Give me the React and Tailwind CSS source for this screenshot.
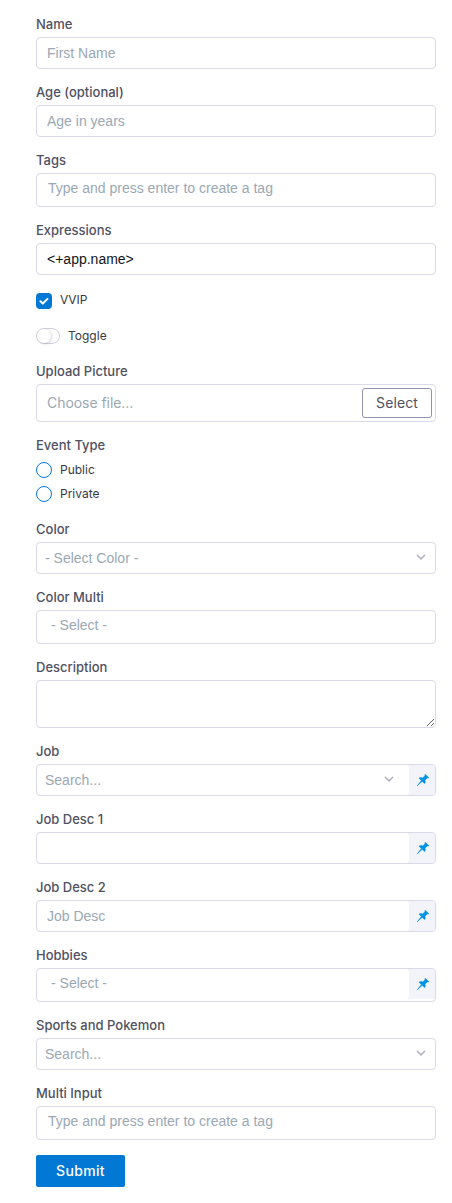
import React from "react";

const box =
  "flex w-full overflow-hidden rounded-[4px] border border-[#d9d9e8] bg-white font-['Liberation_Sans',Arial,sans-serif] text-[14px]";
const inputText =
  "min-w-0 flex-1 bg-transparent text-[#10161a] outline-none placeholder:text-[#9aa8b3] placeholder:opacity-100";

function Field({ label, children }) {
  return (
    <div className="flex flex-col gap-[5px]">
      <label className="h-4 text-[13px] font-medium leading-4 text-[#4f5162]">{label}</label>
      {children}
    </div>
  );
}

function Chevron({ className = "" }) {
  return (
    <svg className={`mt-[10px] h-2 w-[10px] shrink-0 ${className}`} viewBox="0 0 10 8" fill="none">
      <path d="M1.3 2.2 5 5.9 8.7 2.2" stroke="#b0b1c3" strokeWidth="1.5" strokeLinecap="round" strokeLinejoin="round" />
    </svg>
  );
}

function Pin({ short = false }) {
  return (
    <div className={`flex w-[27px] shrink-0 bg-[#f3f3fa] ${short ? "h-[30px]" : "h-full"}`}>
      <div className="-ml-1 h-full w-[5px] shrink-0 rounded-r-[4px] bg-white" />
      <svg className="ml-[8px] mt-[9px] h-3 w-3 shrink-0 overflow-visible" viewBox="0 0 12 12" fill="#0092e4">
        <path
          d="M8.3.2 11.8 3.7c-.5.5-1.1.5-1.6.2L8 6.3c.5 1.2.4 2.3-.4 3.3L5.2 7.3.3 11.8 4.4 6.5 2 4.2C3 3.4 4.4 3.4 5.6 3.9L8.1 1.8C7.8 1.2 7.9.6 8.3.2Z"
          stroke="#0092e4"
          strokeWidth="0.6"
          strokeLinejoin="round"
        />
      </svg>
    </div>
  );
}

function TextBox({ placeholder, value, pin }) {
  return (
    <div className={`${box} h-8`}>
      <input className={`${inputText} pl-[10px]`} placeholder={placeholder} defaultValue={value} />
      {pin && <Pin />}
    </div>
  );
}

function SelectBox({ placeholder, pin }) {
  return (
    <div className={`${box} h-8`}>
      <input className={`${inputText} pl-2`} placeholder={placeholder} />
      <Chevron className={pin ? "mr-[14px]" : "mr-[9px]"} />
      {pin && <Pin />}
    </div>
  );
}

function TagBox({ placeholder, indent = "pl-[11px]", pin }) {
  return (
    <div className={`${box} h-[34px]`}>
      <input className={`${inputText} h-[28px] ${indent}`} placeholder={placeholder} />
      {pin && <Pin short />}
    </div>
  );
}

function Radio({ label }) {
  return (
    <label className="flex h-4 items-center gap-2 text-[12px] leading-4 text-[#383946]">
      <span className="h-4 w-4 rounded-full border border-[#0278d5]" />
      {label}
    </label>
  );
}

export default function App() {
  return (
    <form className="flex h-[1203px] w-[452px] flex-col gap-[15px] bg-white pl-9 pr-4 pt-4 font-['Inter',sans-serif]">
      <Field label="Name">
        <TextBox placeholder="First Name" />
      </Field>
      <Field label="Age (optional)">
        <TextBox placeholder="Age in years" />
      </Field>
      <Field label="Tags">
        <TagBox placeholder="Type and press enter to create a tag" />
      </Field>
      <Field label="Expressions">
        <TextBox value="<+app.name>" />
      </Field>

      <label className="mt-[3px] flex h-4 gap-2 text-[12px] leading-[14px] tracking-[-0.1px] text-[#383946]">
        <span className="flex h-4 w-4 items-center justify-center rounded-[4px] bg-[#0278d5]">
          <svg className="h-4 w-4" viewBox="0 0 16 16" fill="none">
            <path d="m4.4 8.2 2.4 2.3 4.7-4.6" stroke="#fff" strokeWidth="2" strokeLinecap="round" strokeLinejoin="round" />
          </svg>
        </span>
        VVIP
      </label>

      <label className="mt-1 flex h-4 items-center gap-2 text-[12px] leading-4 text-[#383946]">
        <span className="flex h-4 w-6 items-center rounded-full border border-[#cfcfe0] bg-white">
          <span className="h-[14px] w-[14px] rounded-full bg-white shadow-[0_0_1px_rgba(40,41,61,0.06),1px_1px_3px_rgba(96,97,112,0.25)]" />
        </span>
        Toggle
      </label>

      <div className="mt-1">
        <Field label="Upload Picture">
          <div className="flex h-[38px] items-center rounded-[4px] border border-[#d9d9e8] pl-[10px] pr-[3px]">
            <span className="flex-1 pb-px text-[14px] leading-5 tracking-[-0.05px] text-[#9aa8b3]">Choose file...</span>
            <button
              type="button"
              className="h-[30px] w-[70px] rounded-[3px] border border-[#9293ab] text-[14px] leading-5 tracking-[0.1px] text-[#4f5162]"
            >
              Select
            </button>
          </div>
        </Field>
      </div>

      <Field label="Event Type">
        <div className="mb-1 mt-1 flex flex-col gap-2">
          <Radio label="Public" />
          <Radio label="Private" />
        </div>
      </Field>

      <Field label="Color">
        <SelectBox placeholder="- Select Color -" />
      </Field>
      <Field label="Color Multi">
        <TagBox placeholder="- Select -" indent="pl-[14px]" />
      </Field>
      <Field label="Description">
        <textarea className="block h-12 w-full resize-y rounded-[4px] border border-[#d9d9e8] bg-white p-2 outline-none" />
      </Field>
      <Field label="Job">
        <SelectBox placeholder="Search..." pin />
      </Field>
      <Field label="Job Desc 1">
        <TextBox pin />
      </Field>
      <Field label="Job Desc 2">
        <TextBox placeholder="Job Desc" pin />
      </Field>
      <Field label="Hobbies">
        <TagBox placeholder="- Select -" indent="pl-[14px]" pin />
      </Field>
      <Field label="Sports and Pokemon">
        <SelectBox placeholder="Search..." />
      </Field>
      <Field label="Multi Input">
        <TagBox placeholder="Type and press enter to create a tag" />
      </Field>
      <button
        type="button"
        className="h-8 w-[89px] shrink-0 rounded-[2px] bg-[#0278d5] pb-px text-[14px] font-medium leading-5 tracking-[0.35px] text-white"
      >
        Submit
      </button>
    </form>
  );
}
